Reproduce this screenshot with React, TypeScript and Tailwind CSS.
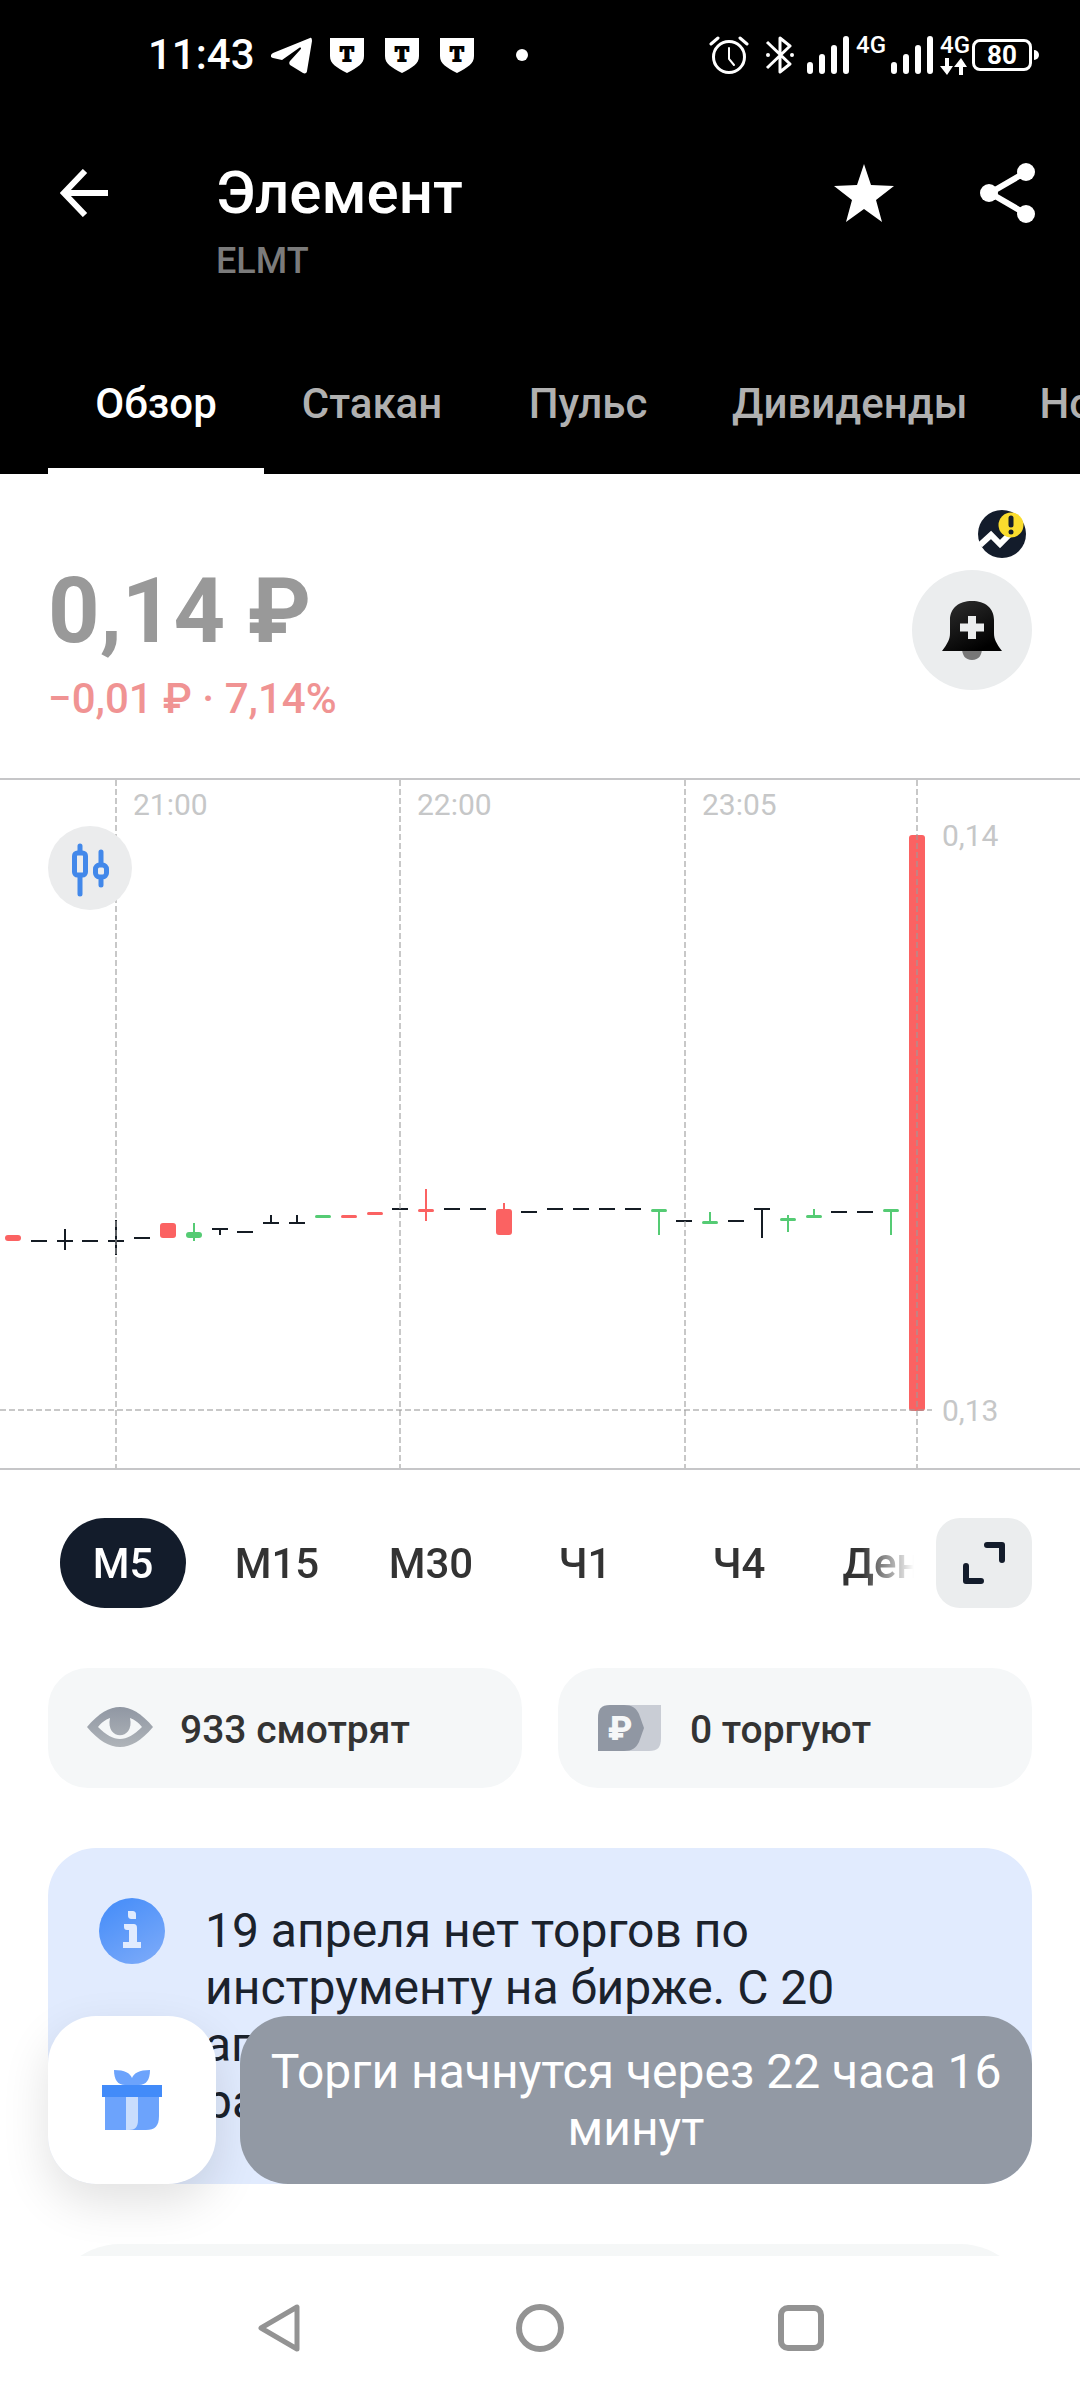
import type { ReactNode } from "react";

type Candle = {
  color: "ink" | "red" | "green";
  top: number;
  bottom: number;
  high?: number;
  low?: number;
};

const candleColors = { ink: "#151c24", red: "#fb6262", green: "#55cb74" };

const flat = (y: number, high?: number, low?: number): Candle => ({
  color: "ink",
  top: y,
  bottom: y + 2,
  high,
  low,
});
const red = (top: number, bottom: number, high?: number, low?: number): Candle => ({
  color: "red",
  top,
  bottom,
  high,
  low,
});
const green = (top: number, bottom: number, high?: number, low?: number): Candle => ({
  color: "green",
  top,
  bottom,
  high,
  low,
});

const candles: Candle[] = [
  red(455, 461),
  flat(460),
  flat(460, 449, 470),
  flat(460),
  flat(460, 440, 475),
  flat(457),
  red(443, 458),
  green(452, 458, 443, 461),
  flat(448, 448, 455),
  flat(451),
  flat(442, 435, 443),
  flat(442, 435, 443),
  green(435, 438),
  red(435, 438),
  red(432, 435),
  flat(428),
  red(429, 432, 409, 441),
  flat(428),
  flat(428),
  red(429, 455, 423, 440),
  flat(431),
  flat(428),
  flat(428),
  flat(428),
  flat(428),
  green(429, 432, 429, 455),
  flat(440),
  green(441, 444, 432, 444),
  flat(440),
  flat(428, 429, 458),
  green(438, 441, 435, 452),
  green(435, 438, 429, 438),
  flat(431),
  flat(431),
  green(429, 432, 429, 455),
  red(55, 631),
];

const gridLines = [
  { x: 116, label: "21:00" },
  { x: 400, label: "22:00" },
  { x: 685, label: "23:05" },
  { x: 917, label: "" },
];

const tabs = ["Обзор", "Стакан", "Пульс", "Дивиденды", "Новости"];
const periods = ["М5", "М15", "М30", "Ч1", "Ч4", "День"];

function ShieldIcon() {
  return (
    <svg viewBox="0 0 36 36" className="size-9" aria-hidden="true">
      <path d="M1 1h34v18c0 8-6 11-17 17C7 30 1 27 1 19z" fill="#fff" />
      <text
        x="18"
        y="24"
        textAnchor="middle"
        fontFamily="Liberation Serif, serif"
        fontWeight="700"
        fontSize="20"
        stroke="#000"
        strokeWidth="2"
      >
        T
      </text>
    </svg>
  );
}

function SignalIcon() {
  return (
    <svg viewBox="0 0 42 38" className="h-[38px] w-[42px]" aria-hidden="true">
      <g stroke="#fff" strokeWidth="6" strokeLinecap="round">
        <path d="M3 29v6M15 21v14M27 12v23M39 3v32" />
      </g>
    </svg>
  );
}

function StatusBar() {
  return (
    <div className="flex h-[110px] items-center justify-between pr-[41px] pl-[148px]">
      <div className="flex items-center">
        <span className="w-[123px] text-[42px] leading-[48px] font-medium">11:43</span>
        <svg viewBox="0 0 42 37" className="mr-4 h-[37px] w-[42px]" aria-hidden="true">
          <path
            d="M39 1 2 16c-3 2-3 4 0 5l9 2 17-12c2-1 3 0 1 2L19 24c-1 1-1 3 0 4l13 8c2 1 4 0 4-2l5-30c0-3-1-4-2-3z"
            fill="#fff"
          />
        </svg>
        <div className="flex gap-[19px]">
          <ShieldIcon />
          <ShieldIcon />
          <ShieldIcon />
        </div>
        <span className="ml-[41px] size-3 rounded-full bg-white" />
      </div>
      <div className="flex items-center">
        <svg viewBox="0 0 40 38" className="h-[38px] w-10" aria-hidden="true">
          <g fill="none" stroke="#fff" strokeWidth="3" strokeLinecap="round">
            <circle cx="20" cy="21" r="15.5" />
            <path d="M2 8l7-6M31 2l7 6" />
            <path d="M20 12v11l5 6" strokeWidth="2" />
          </g>
        </svg>
        <svg viewBox="0 0 30 38" className="ml-4 h-[38px] w-[30px]" aria-hidden="true">
          <path
            d="M2 6l23 22-10 8V2l10 8L2 32"
            fill="none"
            stroke="#fff"
            strokeWidth="3"
            strokeLinejoin="round"
          />
          <circle cx="3" cy="19" r="2" fill="#fff" />
          <circle cx="27" cy="19" r="2" fill="#fff" />
        </svg>
        <div className="ml-3">
          <SignalIcon />
        </div>
        <div className="ml-[7px] flex h-10 w-[28px] flex-col">
          <span className="text-2xl leading-5 font-medium">4G</span>
        </div>
        <div className="ml-[7px]">
          <SignalIcon />
        </div>
        <div className="ml-[7px] flex h-10 w-[28px] flex-col gap-[3px]">
          <span className="text-2xl leading-5 font-medium">4G</span>
          <svg viewBox="0 0 28 17" className="h-[17px] w-7" aria-hidden="true">
            <path d="M5 0h4v8h4l-6 9-7-9h5zM19 17h4V9h4l-6-9-7 9h5z" fill="#fff" />
          </svg>
        </div>
        <div className="ml-1 flex items-center">
          <span className="flex h-8 w-[60px] items-center justify-center rounded-lg border-3 border-white text-[26px] leading-7 font-bold">
            80
          </span>
          <span className="ml-0.5 h-2.5 w-[5px] rounded-r-full bg-white" />
        </div>
      </div>
    </div>
  );
}

function AppBar() {
  return (
    <div className="flex items-start pt-[47px] pr-11 pb-12 pl-[60px]">
      <button type="button" aria-label="Назад" className="flex h-[72px] items-center">
        <svg viewBox="0 0 48 48" className="size-12">
          <path d="M48 24H5M25 2 4 24l21 22" fill="none" stroke="#fff" strokeWidth="6" />
        </svg>
      </button>
      <div className="ml-[108px] flex-1">
        <h1 className="text-[60px] leading-[72px] font-medium">Элемент</h1>
        <p className="mt-2 text-4xl leading-[48px] font-medium text-[#7b7b7b]">ELMT</p>
      </div>
      <button type="button" aria-label="В избранное" className="flex h-[72px] items-center">
        <svg viewBox="0 0 60 58" className="h-[58px] w-[60px]">
          <path
            d="M30 0l7 21 23 1-18 14 6 22-18-13-18 13 6-22L0 22l23-1z"
            fill="#fff"
          />
        </svg>
      </button>
      <button type="button" aria-label="Поделиться" className="ml-[86px] flex h-[72px] items-center">
        <svg viewBox="0 0 56 60" className="h-[60px] w-14">
          <path d="M46 9 10 30l36 21" fill="none" stroke="#fff" strokeWidth="6" />
          <g fill="#fff">
            <circle cx="46" cy="9" r="9" />
            <circle cx="9" cy="30" r="9" />
            <circle cx="46" cy="51" r="9" />
          </g>
        </svg>
      </button>
    </div>
  );
}

function Tabs() {
  return (
    <nav className="flex h-[141px] overflow-hidden pl-12">
      {tabs.map((tab, i) => (
        <button
          key={tab}
          type="button"
          className={[
            "min-w-[216px] shrink-0 border-y-6 border-t-transparent px-9 text-[42px] font-medium",
            i === 0
              ? "border-b-white text-white"
              : "border-b-transparent text-[#b0b0b0]",
          ].join(" ")}
        >
          {tab}
        </button>
      ))}
    </nav>
  );
}

function Quote() {
  return (
    <section className="flex justify-between px-12">
      <div className="pt-[90px] pb-[52px]">
        <p className="text-[90px] leading-[96px] font-bold text-[#999]">0,14 ₽</p>
        <p className="mt-3 text-[42px] leading-[54px] font-medium text-[#f09393]">
          −0,01 ₽ · 7,14%
        </p>
      </div>
      <div className="flex flex-col items-end gap-3 pt-9">
        <svg viewBox="0 0 48 48" className="mr-1.5 size-12" aria-hidden="true">
          <circle cx="24" cy="24" r="24" fill="#131c2b" />
          <path d="M2 35 13 25l9 9 9-9" fill="none" stroke="#fff" strokeWidth="6" />
          <circle cx="33" cy="15" r="12.5" fill="#fadc2d" />
          <path d="M33 8v7" stroke="#131c2b" strokeWidth="5" strokeLinecap="round" />
          <circle cx="33" cy="22" r="2.5" fill="#131c2b" />
        </svg>
        <button
          type="button"
          aria-label="Создать уведомление"
          className="flex size-[120px] items-center justify-center rounded-full bg-[#ebedee]"
        >
          <svg viewBox="0 0 60 60" className="size-[60px]">
            <defs>
              <linearGradient id="bell" x1="0" y1="0" x2="0.6" y2="1">
                <stop offset="0" stopColor="#303030" />
                <stop offset="1" stopColor="#000" />
              </linearGradient>
            </defs>
            <path d="M20 48h20c0 7-3 12-10 12s-10-5-10-12z" fill="#777" />
            <path d="M0 51c6-8 8-12 8-18V20C8 8 17 1 30 1s22 7 22 19v13c0 6 2 10 8 18z" fill="url(#bell)" />
            <path d="M30 16v23M18 27.5h24" stroke="#ebedee" strokeWidth="8" />
          </svg>
        </button>
      </div>
    </section>
  );
}

function Chart() {
  return (
    <section className="relative border-y-2 border-[#c6c6c8]">
      <svg viewBox="0 0 1080 688" className="block w-full" role="img" aria-label="График цены">
        {candles.map((c, i) => {
          const x = Math.round(12.9 + 25.83 * i);
          const height = c.bottom - c.top;
          return (
            <g key={i} fill={candleColors[c.color]}>
              <rect
                x={x - 8}
                y={c.top}
                width="16"
                height={height}
                rx={c.color === "ink" ? 0 : Math.min(3, height / 2)}
              />
              {c.high !== undefined && c.low !== undefined && (
                <rect x={x - 1} y={c.high} width="2" height={c.low - c.high} />
              )}
            </g>
          );
        })}
        <g stroke="#9a9a9a" strokeOpacity="0.55" strokeWidth="2">
          {gridLines.map((line) => (
            <path key={line.x} d={`M${line.x} 0V688`} strokeDasharray="6 3" />
          ))}
          <path d="M0 630H932" strokeDasharray="6 3" />
        </g>
        <g fill="#c6c7c8" fontFamily="Roboto, sans-serif" fontSize="30">
          {gridLines.map((line) => (
            <text key={line.x} x={line.x + 17} y="35">
              {line.label}
            </text>
          ))}
          <text x="942" y="66">0,14</text>
          <text x="942" y="641">0,13</text>
        </g>
      </svg>
      <button
        type="button"
        aria-label="Тип графика"
        className="absolute top-[46px] left-12 flex size-[84px] items-center justify-center rounded-full bg-[#ebeced]"
      >
        <svg viewBox="0 0 84 84" className="size-full">
          <g fill="none" stroke="#4288ea" strokeWidth="5" strokeLinecap="round">
            <rect x="26.500" y="27" width="11" height="22" rx="3" />
            <path d="M32 20v6M32 50v18M53 26v11M53 54v5" />
            <rect x="47.500" y="39" width="11" height="12" rx="4" />
          </g>
        </svg>
      </button>
    </section>
  );
}

function Periods() {
  return (
    <div className="flex items-center pt-12 pr-12 pl-[46px]">
      <div className="flex min-w-0 flex-1 overflow-hidden mask-r-from-94%">
        {periods.map((period, i) => (
          <button
            key={period}
            type="button"
            className={[
              "mx-3.5 h-[90px] w-[126px] shrink-0 rounded-full text-[42px] font-medium",
              i === 0 ? "bg-[#131c2b] text-white" : "text-[#333]",
            ].join(" ")}
          >
            {period}
          </button>
        ))}
      </div>
      <button
        type="button"
        aria-label="На весь экран"
        className="ml-[22px] flex h-[90px] w-24 items-center justify-center rounded-3xl bg-[#ebedee]"
      >
        <svg viewBox="0 0 42 42" className="size-[42px]">
          <path
            d="M24 3h15v15M3 24v15h15"
            fill="none"
            stroke="#131c2b"
            strokeWidth="6"
            strokeLinecap="round"
            strokeLinejoin="round"
          />
        </svg>
      </button>
    </div>
  );
}

function Chip({ icon, children }: { icon: ReactNode; children: ReactNode }) {
  return (
    <div className="flex h-[120px] items-center gap-[27px] rounded-[40px] bg-[#f5f7f8] pl-[39px]">
      {icon}
      <span className="pt-1 text-[39px] leading-[48px] font-medium text-[#333]">{children}</span>
    </div>
  );
}

function EyeIcon() {
  return (
    <svg viewBox="0 0 66 42" className="h-[42px] w-[66px]" aria-hidden="true">
      <defs>
        <linearGradient id="eye" x1="0" y1="0" x2="0" y2="1">
          <stop offset="0" stopColor="#9097a3" />
          <stop offset="1" stopColor="#afb4b9" />
        </linearGradient>
      </defs>
      <path d="M0 20C12 6 22 0 33 0s21 6 33 20C54 34 44 40 33 40S12 34 0 20z" fill="url(#eye)" />
      <path d="M11 20c4-5 7-7 12-9-5 23 25 23 20 0 5 2 8 4 12 9-8 8-15 12-22 12s-14-4-22-12z" fill="#f5f7f8" />
    </svg>
  );
}

function RubleIcon() {
  return (
    <svg viewBox="0 0 66 46" className="h-[46px] w-[66px]" aria-hidden="true">
      <path d="M20 0h44v33c0 9-3 13-12 13H20z" fill="#c9cdd5" />
      <path d="M13 0h14c8 0 12 3 15 9l5 14-5 14c-3 6-7 9-15 9H1V13C1 4 4 0 13 0z" fill="#9097a3" />
      <text
        x="23"
        y="35"
        textAnchor="middle"
        fontFamily="Roboto, sans-serif"
        fontWeight="900"
        fontSize="34"
        fill="#f5f7f8"
      >
        ₽
      </text>
    </svg>
  );
}

function Notice() {
  return (
    <div className="flex items-start rounded-[48px] bg-[#e1ebfe] py-[54px] pl-[51px]">
      <svg viewBox="0 0 66 66" className="-mt-1 size-[66px] shrink-0" aria-hidden="true">
        <defs>
          <linearGradient id="info" x1="0" y1="0" x2="0.6" y2="1">
            <stop offset="0" stopColor="#428bf9" />
            <stop offset="1" stopColor="#76a7f9" />
          </linearGradient>
        </defs>
        <circle cx="33" cy="33" r="33" fill="url(#info)" />
        <path d="M29 13h4c3 0 4 1 4 4v4h-4c-3 0-4-1-4-4z" fill="#e1ebfe" />
        <path d="M25 26h9c3 0 4 1 4 4v14h4v6H24v-6h6V32h-2c-2 0-3-1-3-3z" fill="#e1ebfe" />
      </svg>
      <p className="ml-10 text-5xl leading-[57px] text-[#1b222c]">
        19 апреля нет торгов по
        <br />
        инструменту на бирже. С 20
        <br />
        апреля торги пройдут по
        <br />
        расписанию
      </p>
    </div>
  );
}

function FloatingActions() {
  return (
    <div className="absolute inset-x-12 bottom-[72px] flex items-stretch gap-6">
      <button
        type="button"
        aria-label="Подарок"
        className="flex w-[168px] items-center justify-center rounded-[48px] bg-white shadow-[0_18px_48px_rgba(0,0,0,0.12)]"
      >
        <svg viewBox="0 0 60 60" className="size-[60px]">
          <path d="M12 0c11 0 16 3 18 8 2-5 7-8 18-8 0 10-4 15-11 15H23C16 15 12 10 12 0z" fill="#6ca3fc" />
          <path d="M3 26h54v20c0 10-4 14-13 14H3z" fill="#6ca3fc" />
          <path d="M24 26h12v24c0 7-3 10-9 10h-3z" fill="#c9ddfd" />
          <path d="M0 15h60v12H0z" fill="#428bf9" />
        </svg>
      </button>
      <button
        type="button"
        className="min-h-[168px] flex-1 rounded-[48px] bg-[#9299a4] px-7 py-[27px] text-5xl leading-[57px] text-white"
      >
        Торги начнутся через 22 часа 16 минут
      </button>
    </div>
  );
}

function SystemNav() {
  return (
    <nav className="flex h-36 px-[149px]">
      <button type="button" aria-label="Назад" className="flex flex-1 items-center justify-center">
        <svg viewBox="0 0 48 48" className="size-12">
          <path d="M42 3v42L6 24z" fill="none" stroke="#939393" strokeWidth="5" strokeLinejoin="round" />
        </svg>
      </button>
      <button type="button" aria-label="Домой" className="flex flex-1 items-center justify-center">
        <span className="size-12 rounded-full border-6 border-[#939393]" />
      </button>
      <button type="button" aria-label="Недавние" className="flex flex-1 items-center justify-center">
        <span className="size-[46px] rounded-[10px] border-6 border-[#939393]" />
      </button>
    </nav>
  );
}

export default function App() {
  return (
    <div className="flex min-h-screen flex-col bg-white font-[Roboto,sans-serif]">
      <header className="bg-black text-white">
        <StatusBar />
        <AppBar />
        <Tabs />
      </header>
      <main className="relative flex flex-1 flex-col">
        <Quote />
        <Chart />
        <Periods />
        <div className="flex flex-col gap-[60px] px-12 pt-[60px]">
          <div className="grid grid-cols-2 gap-9">
            <Chip icon={<EyeIcon />}>933 смотрят</Chip>
            <Chip icon={<RubleIcon />}>0 торгуют</Chip>
          </div>
          <Notice />
          <div className="h-3 overflow-hidden">
            <div className="h-36 rounded-[72px] bg-[#f5f7f7]" />
          </div>
        </div>
        <FloatingActions />
      </main>
      <SystemNav />
    </div>
  );
}
